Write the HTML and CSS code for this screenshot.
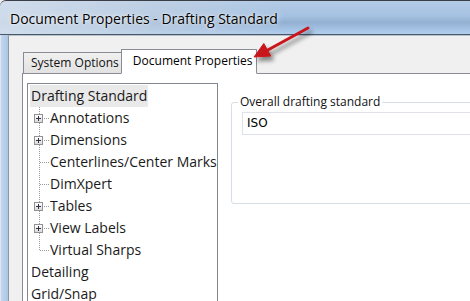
FILE: index.html
```html
<!DOCTYPE html>
<html lang="en">
<head>
    <meta charset="UTF-8">
    <title>Document Properties - Drafting Standard</title>
    <link rel="stylesheet" href="styles.css">
</head>
<body>

<div class="window">
    <div class="titlebar">Document Properties - Drafting Standard</div>

    <div class="frame">
        <div class="frame-side"></div>
        <div class="client">
            <div class="tabs">
                <div class="tab">System Options</div>
                <div class="tab active">Document Properties</div>
            </div>

            <div class="panel">
                <div class="tree">
                    <div class="node selected">Drafting Standard</div>
                    <div class="children">
                        <div class="child"><span class="twig"><span class="plus"></span></span>Annotations</div>
                        <div class="child"><span class="twig"><span class="plus"></span></span>Dimensions</div>
                        <div class="child"><span class="twig"></span>Centerlines/Center Marks</div>
                        <div class="child"><span class="twig"></span>DimXpert</div>
                        <div class="child"><span class="twig"><span class="plus"></span></span>Tables</div>
                        <div class="child"><span class="twig"><span class="plus"></span></span>View Labels</div>
                        <div class="child"><span class="twig"></span>Virtual Sharps</div>
                    </div>
                    <div class="node">Detailing</div>
                    <div class="node">Grid/Snap</div>
                </div>

                <fieldset class="group">
                    <legend>Overall drafting standard</legend>
                    <div class="field">ISO</div>
                </fieldset>
            </div>
        </div>
    </div>

    <!-- red callout arrow pointing at the tab -->
    <svg class="callout" width="470" height="301" viewBox="0 0 470 301">
        <defs>
            <filter id="shade" x="-20%" y="-20%" width="160%" height="160%">
                <feDropShadow dx="3" dy="4" stdDeviation="2" flood-color="#000" flood-opacity="0.45"/>
            </filter>
        </defs>
        <g filter="url(#shade)" fill="#c8151b" stroke="#c8151b">
            <line x1="308" y1="28" x2="266" y2="51" stroke-width="3" stroke-linecap="round"/>
            <polygon points="254,57 263.8,43.5 270.8,56" stroke-width="1" stroke-linejoin="round"/>
        </g>
    </svg>
</div>

</body>
</html>
```

FILE: styles.css
```css
body {
    margin: 0;
    background: #f0f0f0;
    font-family: "Open Sans", "Noto Sans", sans-serif;
    color: #1a1a1a;
}
.window {
    position: relative;
    width: 470px;
    height: 301px;
    overflow: hidden;
    display: flex;
    flex-direction: column;
}
.titlebar {
    height: 33px;
    flex: none;
    border-top: 1px solid #3b3f45;
    border-bottom: 1px solid #4a5766;
    border-top-left-radius: 6px;
    padding-left: 10px;
    font-size: 14px;
    line-height: 35px;
    color: #000;
    text-shadow: 0 0 6px rgba(255, 255, 255, 0.9), 0 0 2px rgba(255, 255, 255, 0.8);
    background:
        linear-gradient(to right, rgba(214, 224, 236, 0.85), rgba(200, 212, 226, 0.5) 35%, rgba(170, 198, 230, 0) 60%),
        linear-gradient(to bottom, #b3cbe6 0%, #a6c2e2 45%, #93b0d2 65%, #a4c2e4 85%, #b1ceec 100%);
}
.frame {
    flex: 1;
    display: flex;
    min-height: 0;
}
.frame-side {
    width: 7px;
    flex: none;
    border-left: 1px solid #dfe7f0;
    background: linear-gradient(to right, #c3d7ee, #a9c6e6);
}
.client {
    flex: 1;
    border-top: 1px solid #b7c2cf;
    border-left: 1px solid #8d97a3;
    padding: 13px 0 0 13px;
    background: #f0f0f0;
    display: flex;
    flex-direction: column;
    min-width: 0;
}
.tabs {
    display: flex;
    align-items: flex-end;
    padding-left: 1px;
    margin-bottom: -1px;
    font-size: 12px;
}
.tab {
    height: 20px;
    line-height: 20px;
    padding: 0 2px 0 7px;
    border: 1px solid #898c95;
    border-bottom: 1px solid #898c95;
    background: linear-gradient(to bottom, #f0f0f0, #e2e2e2);
    color: #111;
}
.tab.active {
    position: relative;
    height: 23px;
    line-height: 22px;
    margin-left: -1px;
    padding: 0 3px 0 11px;
    background: #fff;
    border-bottom-color: #fff;
    color: #000;
}
.panel {
    flex: 1;
    width: 480px;
    border: 1px solid #898c95;
    background: #fff;
    padding: 9px 0 0 4px;
    display: flex;
    align-items: flex-start;
    gap: 13px;
}
.tree {
    width: 189px;
    height: 240px;
    flex: none;
    border: 1px solid #828790;
    padding-top: 1px;
    font-size: 14px;
}
.node {
    height: 22px;
    line-height: 22px;
    margin-left: 2px;
    padding: 0 1px;
    display: table;
    white-space: nowrap;
}
.node.selected {
    background: #e9e9e9;
}
.children {
    margin-left: 2px;
    background: repeating-linear-gradient(to bottom, #9a9a9a 0 1px, transparent 1px 2px) 9px 0 / 1px calc(100% - 11px) no-repeat;
}
.child {
    height: 22px;
    line-height: 22px;
    display: flex;
    align-items: center;
    white-space: nowrap;
}
.twig {
    width: 16px;
    height: 22px;
    flex: none;
    padding-left: 4px;
    display: flex;
    align-items: center;
    background: repeating-linear-gradient(to right, #9a9a9a 0 1px, transparent 1px 2px) 10px 11px / 10px 1px no-repeat;
}
.plus {
    width: 7px;
    height: 7px;
    border: 1px solid #929292;
    background:
        linear-gradient(#2e3440, #2e3440) center / 5px 1px no-repeat,
        linear-gradient(#2e3440, #2e3440) center / 1px 5px no-repeat,
        linear-gradient(to bottom, #ffffff, #dadada);
}
.group {
    margin: 12px 0 0 0;
    width: 250px;
    height: 109px;
    flex: none;
    border: 1px solid #d5dfe5;
    border-radius: 3px;
    padding: 0 0 0 6px;
    box-sizing: border-box;
}
.group legend {
    padding: 0 2px;
    font-size: 12px;
    line-height: 14px;
    color: #111;
}
.field {
    margin: 3px 0 0 4px;
    height: 23px;
    box-sizing: border-box;
    border: 1px solid #dfe3e9;
    padding-left: 4px;
    font-family: "DejaVu Sans", sans-serif;
    font-size: 12px;
    line-height: 21px;
    color: #000;
}
.callout {
    position: absolute;
    top: 0;
    left: 0;
    pointer-events: none;
}
```
